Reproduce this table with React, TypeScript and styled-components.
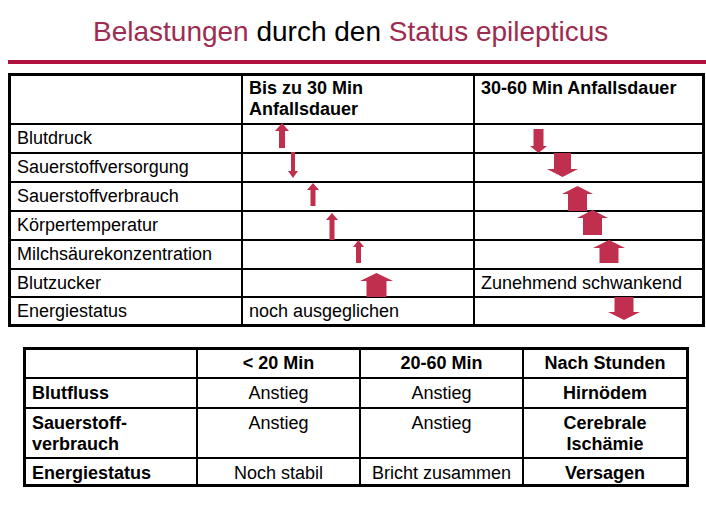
import React from "react";
import styled, { createGlobalStyle } from "styled-components";

const Global = createGlobalStyle`
  html, body { margin: 0; padding: 0; background: #fff; }
  body { font-family: "Liberation Sans", Arial, sans-serif; color: #000; }
`;

const Page = styled.div`
  width: 706px;
  height: 529px;
  position: relative;
  overflow: hidden;
  padding-top: 16px;
  box-sizing: border-box;
`;

const Title = styled.h1`
  margin: 0;
  padding-left: 93px;
  font-weight: normal;
  font-size: 28px;
  line-height: 32px;
  color: #000;
  white-space: nowrap;
`;

const Accent = styled.span`
  color: #9e2b50;
`;

const Rule = styled.div`
  margin: 12px 0 0 8px;
  height: 4px;
  background: #b0113f;
`;

const TableWrap = styled.div`
  position: relative;
  margin: 9px 0 0 8px;
  width: 697px;
`;

const Grid = styled.div<{ $cols: string; $rows: string }>`
  display: grid;
  grid-template-columns: ${(p) => p.$cols};
  grid-template-rows: ${(p) => p.$rows};
  gap: 2px;
  background: #000;
  border: 3px solid #000;
`;

const Cell = styled.div<{ $bold?: boolean; $center?: boolean; $pt?: number }>`
  background: #fff;
  font-size: 18px;
  line-height: 21px;
  padding: ${(p) => p.$pt ?? 3}px 6px 0 6px;
  font-weight: ${(p) => (p.$bold ? "bold" : "normal")};
  text-align: ${(p) => (p.$center ? "center" : "left")};
  white-space: nowrap;
  overflow: hidden;
`;

const Table2Wrap = styled.div`
  margin: 20px 0 0 23px;
  width: 666px;
`;

const ArrowSvg = styled.svg`
  position: absolute;
  display: block;
  fill: #c0304e;
`;

type ArrowSpec = {
  cx: number;
  y: number;
  h: number;
  sw: number;
  hw: number;
  hh: number;
  dir: "up" | "down";
};

const arrows: ArrowSpec[] = [
  { cx: 282, y: 123, h: 25, sw: 6, hw: 14, hh: 8, dir: "up" },
  { cx: 293, y: 152, h: 26, sw: 4, hw: 10, hh: 7, dir: "down" },
  { cx: 313, y: 183, h: 23, sw: 5, hw: 12, hh: 7, dir: "up" },
  { cx: 332, y: 213, h: 27, sw: 5, hw: 12, hh: 7, dir: "up" },
  { cx: 358, y: 240, h: 23, sw: 5, hw: 11, hh: 7, dir: "up" },
  { cx: 376, y: 273, h: 24, sw: 20, hw: 33, hh: 8, dir: "up" },
  { cx: 538, y: 129, h: 24, sw: 10, hw: 17, hh: 7, dir: "down" },
  { cx: 562, y: 153, h: 24, sw: 17, hw: 31, hh: 8, dir: "down" },
  { cx: 577, y: 186, h: 25, sw: 19, hw: 31, hh: 8, dir: "up" },
  { cx: 592, y: 210, h: 25, sw: 19, hw: 31, hh: 8, dir: "up" },
  { cx: 609, y: 240, h: 23, sw: 19, hw: 32, hh: 8, dir: "up" },
  { cx: 624, y: 297, h: 23, sw: 19, hw: 32, hh: 8, dir: "down" },
];

const Arrow: React.FC<{ a: ArrowSpec; ox: number; oy: number }> = ({ a, ox, oy }) => {
  const w = a.hw;
  const c = w / 2;
  const s = a.sw / 2;
  const pts =
    a.dir === "up"
      ? [
          [c, 0],
          [w, a.hh],
          [c + s, a.hh],
          [c + s, a.h],
          [c - s, a.h],
          [c - s, a.hh],
          [0, a.hh],
        ]
      : [
          [c - s, 0],
          [c + s, 0],
          [c + s, a.h - a.hh],
          [w, a.h - a.hh],
          [c, a.h],
          [0, a.h - a.hh],
          [c - s, a.h - a.hh],
        ];
  return (
    <ArrowSvg
      width={w}
      height={a.h}
      viewBox={`0 0 ${w} ${a.h}`}
      style={{ left: a.cx - c - ox, top: a.y - oy }}
    >
      <polygon points={pts.map((p) => p.join(",")).join(" ")} />
    </ArrowSvg>
  );
};

const rows1: [string, string][] = [
  ["Blutdruck", ""],
  ["Sauerstoffversorgung", ""],
  ["Sauerstoffverbrauch", ""],
  ["Körpertemperatur", ""],
  ["Milchsäurekonzentration", ""],
  ["Blutzucker", "Zunehmend schwankend"],
  ["Energiestatus", ""],
];

export default function App() {
  return (
    <Page>
      <Global />
      <Title>
        <Accent>Belastungen</Accent> durch den <Accent>Status epilepticus</Accent>
      </Title>
      <Rule />
      <TableWrap>
        <Grid $cols="230px 230px 227px" $rows="47px 27px 27px 27px 27px 27px 26px 26px">
          <Cell />
          <Cell $bold $pt={2}>
            Bis zu 30 Min
            <br />
            Anfallsdauer
          </Cell>
          <Cell $bold $pt={2}>30-60 Min Anfallsdauer</Cell>
          {rows1.map(([label, late]) => (
            <React.Fragment key={label}>
              <Cell>{label}</Cell>
              <Cell>{label === "Energiestatus" ? "noch ausgeglichen" : ""}</Cell>
              <Cell>{late}</Cell>
            </React.Fragment>
          ))}
        </Grid>
        {arrows.map((a, i) => (
          <Arrow key={i} a={a} ox={8} oy={73} />
        ))}
      </TableWrap>
      <Table2Wrap>
        <Grid $cols="170px 161px 161px 162px" $rows="27px 28px 48px 25px">
          <Cell />
          <Cell $bold $center>&lt; 20 Min</Cell>
          <Cell $bold $center>20-60 Min</Cell>
          <Cell $bold $center>Nach Stunden</Cell>

          <Cell $bold $pt={4}>Blutfluss</Cell>
          <Cell $center $pt={4}>Anstieg</Cell>
          <Cell $center $pt={4}>Anstieg</Cell>
          <Cell $bold $center $pt={4}>Hirnödem</Cell>

          <Cell $bold $pt={4}>
            Sauerstoff-
            <br />
            verbrauch
          </Cell>
          <Cell $center $pt={4}>Anstieg</Cell>
          <Cell $center $pt={4}>Anstieg</Cell>
          <Cell $bold $center $pt={4}>
            Cerebrale
            <br />
            Ischämie
          </Cell>

          <Cell $bold $pt={4}>Energiestatus</Cell>
          <Cell $center $pt={4}>Noch stabil</Cell>
          <Cell $center $pt={4}>Bricht zusammen</Cell>
          <Cell $bold $center $pt={4}>Versagen</Cell>
        </Grid>
      </Table2Wrap>
    </Page>
  );
}
